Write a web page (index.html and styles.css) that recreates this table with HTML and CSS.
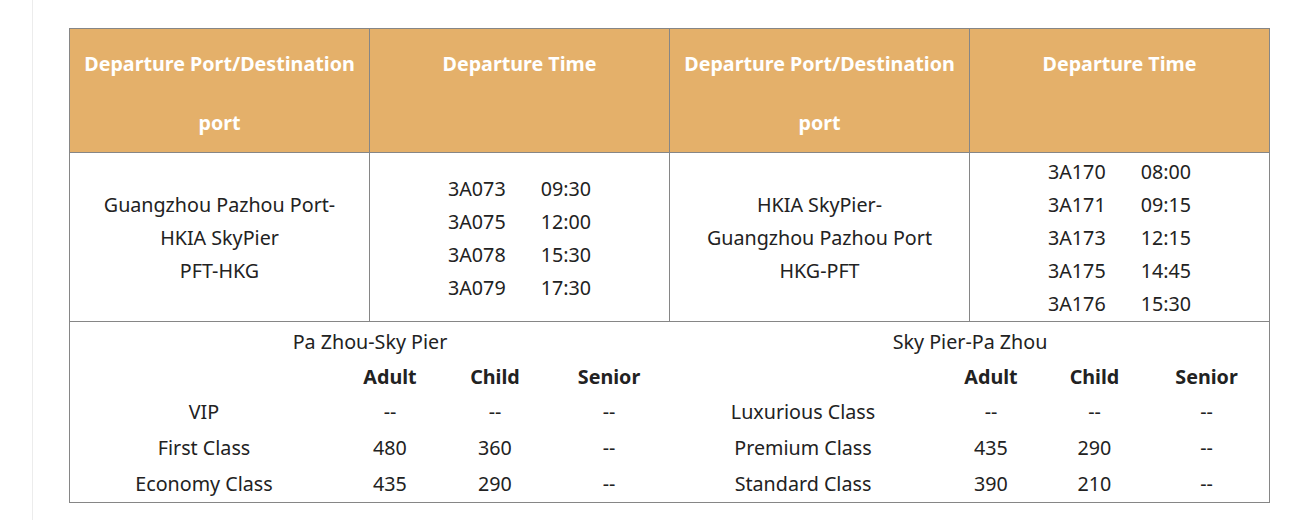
FILE: index.html
```html
<!DOCTYPE html>
<html>
<head>
<meta charset="utf-8">
<link rel="stylesheet" href="styles.css">
</head>
<body>
<div class="page">
  <table class="routes">
    <colgroup><col class="c"><col class="c"><col class="c"><col class="c"></colgroup>
    <thead>
      <tr>
        <th>Departure Port/Destination<br>port</th>
        <th>Departure Time</th>
        <th>Departure Port/Destination<br>port</th>
        <th>Departure Time</th>
      </tr>
    </thead>
    <tbody>
      <tr class="sched">
        <td>Guangzhou Pazhou Port-<br>HKIA SkyPier<br>PFT-HKG</td>
        <td>
          <div class="times">
            <span>3A073</span><span>09:30</span>
            <span>3A075</span><span>12:00</span>
            <span>3A078</span><span>15:30</span>
            <span>3A079</span><span>17:30</span>
          </div>
        </td>
        <td>HKIA SkyPier-<br>Guangzhou Pazhou Port<br>HKG-PFT</td>
        <td>
          <div class="times">
            <span>3A170</span><span>08:00</span>
            <span>3A171</span><span>09:15</span>
            <span>3A173</span><span>12:15</span>
            <span>3A175</span><span>14:45</span>
            <span>3A176</span><span>15:30</span>
          </div>
        </td>
      </tr>
      <tr class="fares">
        <td colspan="4">
          <div class="fare-pair">
            <table class="fare fare-left">
              <colgroup><col class="k"><col class="a"><col class="b"><col></colgroup>
              <tr><td colspan="4" class="title">Pa Zhou-Sky Pier</td></tr>
              <tr class="head"><td></td><td>Adult</td><td>Child</td><td>Senior</td></tr>
              <tr><td>VIP</td><td>--</td><td>--</td><td>--</td></tr>
              <tr><td>First Class</td><td>480</td><td>360</td><td>--</td></tr>
              <tr><td>Economy Class</td><td>435</td><td>290</td><td>--</td></tr>
            </table>
            <table class="fare fare-right">
              <colgroup><col class="k"><col class="a"><col class="b"><col></colgroup>
              <tr><td colspan="4" class="title">Sky Pier-Pa Zhou</td></tr>
              <tr class="head"><td></td><td>Adult</td><td>Child</td><td>Senior</td></tr>
              <tr><td>Luxurious Class</td><td>--</td><td>--</td><td>--</td></tr>
              <tr><td>Premium Class</td><td>435</td><td>290</td><td>--</td></tr>
              <tr><td>Standard Class</td><td>390</td><td>210</td><td>--</td></tr>
            </table>
          </div>
        </td>
      </tr>
    </tbody>
  </table>
</div>
</body>
</html>
```

FILE: styles.css
```css
html, body {
  margin: 0;
  padding: 0;
  background: #fff;
}
body {
  font-family: "Noto Sans", "Open Sans", sans-serif;
  color: #222;
  font-size: 19.7px;
}
.page {
  margin-left: 32px;
  border-left: 1px solid #ececec;
  min-height: 520px;
  padding: 28px 0 0 36px;
  box-sizing: border-box;
}
.routes {
  border-collapse: collapse;
  table-layout: fixed;
  width: 1201px;
}
.routes col.c {
  width: 300px;
}
.routes > thead > tr > th,
.routes > tbody > tr > td {
  border: 1px solid #868686;
  text-align: center;
}
.routes th {
  background: #e4b06a;
  color: #fff;
  font-weight: 700;
  font-size: 19.7px;
  line-height: 59px;
  padding: 5px 0 0;
  vertical-align: top;
}
.sched td {
  line-height: 33px;
  padding: 2px 0 1px;
  vertical-align: middle;
}
.times {
  display: inline-grid;
  grid-template-columns: auto auto;
  column-gap: 35px;
  justify-items: start;
  text-align: left;
  font-variant-numeric: tabular-nums;
}
.routes > tbody > tr.fares > td {
  padding: 3px 0 0;
  vertical-align: top;
}
.fare-pair {
  display: grid;
  grid-template-columns: 600px 600px;
}
.fare {
  border-collapse: collapse;
  table-layout: fixed;
  width: 100%;
}
.fare td {
  padding: 0;
  text-align: center;
  height: 36px;
  line-height: 36px;
  white-space: nowrap;
}
.fare td.title {
  height: 34px;
  line-height: 34px;
}
.fare .head td {
  font-weight: 700;
  height: 35px;
  line-height: 35px;
}
.fare-left col.k { width: 268px; }
.fare-left col.a { width: 104px; }
.fare-left col.b { width: 106px; }
.fare-right col.k { width: 266px; }
.fare-right col.a { width: 110px; }
.fare-right col.b { width: 97px; }
```
